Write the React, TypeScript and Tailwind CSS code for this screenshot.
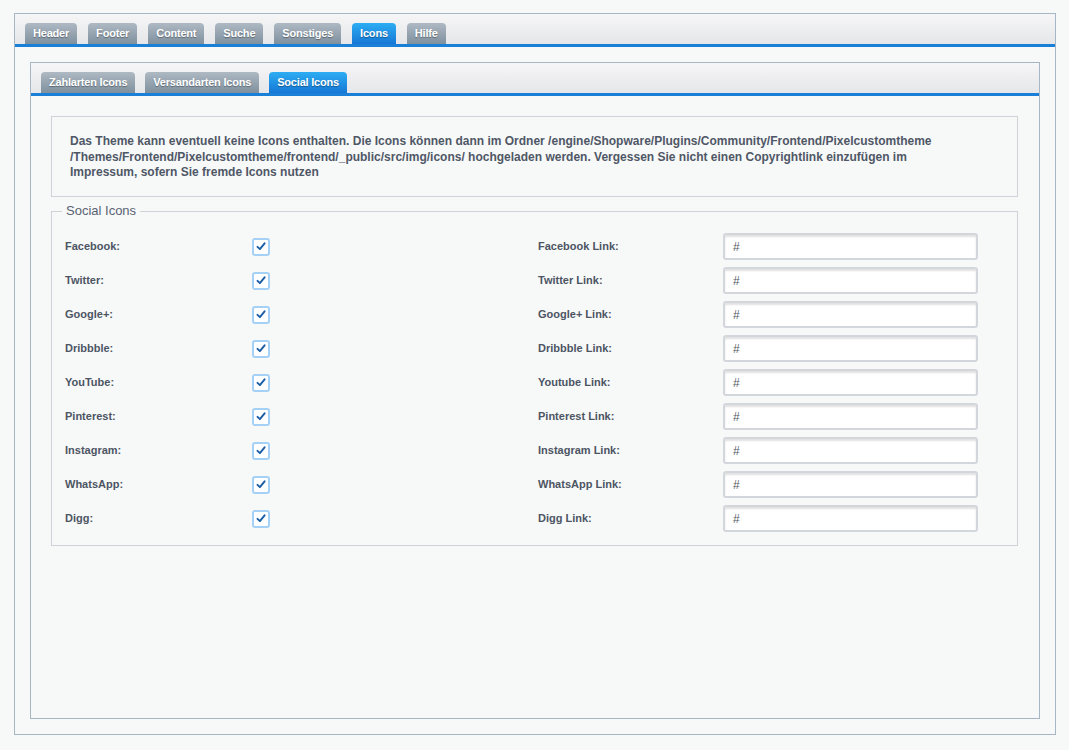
import React from 'react';

const mainTabs = ['Header', 'Footer', 'Content', 'Suche', 'Sonstiges', 'Icons', 'Hilfe'];
const subTabs = ['Zahlarten Icons', 'Versandarten Icons', 'Social Icons'];

const rows = [
  { name: 'Facebook:', link: 'Facebook Link:' },
  { name: 'Twitter:', link: 'Twitter Link:' },
  { name: 'Google+:', link: 'Google+ Link:' },
  { name: 'Dribbble:', link: 'Dribbble Link:' },
  { name: 'YouTube:', link: 'Youtube Link:' },
  { name: 'Pinterest:', link: 'Pinterest Link:' },
  { name: 'Instagram:', link: 'Instagram Link:' },
  { name: 'WhatsApp:', link: 'WhatsApp Link:' },
  { name: 'Digg:', link: 'Digg Link:' },
];

function Tab({ label, active }: { label: string; active: boolean }) {
  return (
    <div
      className={
        'h-[21px] px-[8px] rounded-t-[4px] flex items-center text-[11px] font-bold tracking-[-0.2px] text-white [text-shadow:0_1px_1px_rgba(0,0,0,0.35)] ' +
        (active
          ? 'bg-gradient-to-b from-[#2eadf3] to-[#1677d5]'
          : 'bg-gradient-to-b from-[#aeb9c3] to-[#7f909e]')
      }
    >
      {label}
    </div>
  );
}

function TabBar({ tabs, active, gap }: { tabs: string[]; active: string; gap: string }) {
  return (
    <div
      className={
        'h-[33px] shrink-0 flex items-end pl-[10px] border-b-[3px] border-[#1a7fd6] bg-gradient-to-b from-[#f6f6f7] to-[#e5e6e9] ' +
        gap
      }
    >
      {tabs.map((t) => (
        <Tab key={t} label={t} active={t === active} />
      ))}
    </div>
  );
}

function Check() {
  return (
    <div className="w-[18px] h-[18px] rounded-[3px] border-2 border-[#a4d1f5] bg-white flex items-center justify-center">
      <svg width="10" height="9" viewBox="0 0 10 9">
        <path d="M1.5 4.8 L3.9 7.2 L8.6 1.3" fill="none" stroke="#1c5ea6" strokeWidth="1.9" strokeLinecap="round" strokeLinejoin="round" />
      </svg>
    </div>
  );
}

export default function App() {
  return (
    <div
      className="w-[1069px] h-[750px] bg-[#f7f9f9] pt-[13px] pl-[14px] pr-[13px] pb-[15px] flex flex-col"
      style={{ fontFamily: '"Liberation Sans", Arial, sans-serif' }}
    >
      {/* äußeres Panel */}
      <div className="flex-1 border border-[#a6b6c4] flex flex-col">
        <TabBar tabs={mainTabs} active="Icons" gap="gap-[11px]" />
        <div className="flex-1 p-[15px] flex flex-col">
          {/* inneres Panel */}
          <div className="flex-1 border border-[#a6b6c4] flex flex-col">
            <TabBar tabs={subTabs} active="Social Icons" gap="gap-[10px]" />
            <div className="flex-1 pl-[20px] pt-[20px] pr-[21px]">
              {/* Hinweis */}
              <div className="h-[81px] border border-[#cfd3d8] pl-[18px] pt-[17px] text-[12px] leading-[15.5px] font-bold text-[#4f5766]">
                <div className="whitespace-nowrap">
                  Das Theme kann eventuell keine Icons enthalten. Die Icons können dann im Ordner /engine/Shopware/Plugins/Community/Frontend/Pixelcustomtheme
                </div>
                <div className="whitespace-nowrap">
                  /Themes/Frontend/Pixelcustomtheme/frontend/_public/src/img/icons/ hochgeladen werden. Vergessen Sie nicht einen Copyrightlink einzufügen im
                </div>
                <div className="whitespace-nowrap">Impressum, sofern Sie fremde Icons nutzen</div>
              </div>

              {/* Social Icons */}
              <fieldset className="mt-[6px] border border-[#cfd3d8] pl-[13px] pt-[14px] pb-[13px]">
                <legend className="-ml-[3px] px-1 text-[13px] leading-[16px] text-[#5a6272]">Social Icons</legend>
                <div className="grid grid-cols-[187px_286px_185px_255px] gap-y-[7px] items-center">
                  {rows.map((r) => (
                    <React.Fragment key={r.name}>
                      <div className="text-[11px] font-bold text-[#4d5563]">{r.name}</div>
                      <div>
                        <Check />
                      </div>
                      <div className="text-[11px] font-bold text-[#4d5563]">{r.link}</div>
                      <div className="h-[27px] rounded-[3px] border-2 border-[#d3d7dc] bg-white shadow-[inset_0_2px_2px_rgba(0,0,0,0.12)] flex items-center pl-[8px] text-[12px] text-[#555c66]">
                        #
                      </div>
                    </React.Fragment>
                  ))}
                </div>
              </fieldset>
            </div>
          </div>
        </div>
      </div>
    </div>
  );
}
